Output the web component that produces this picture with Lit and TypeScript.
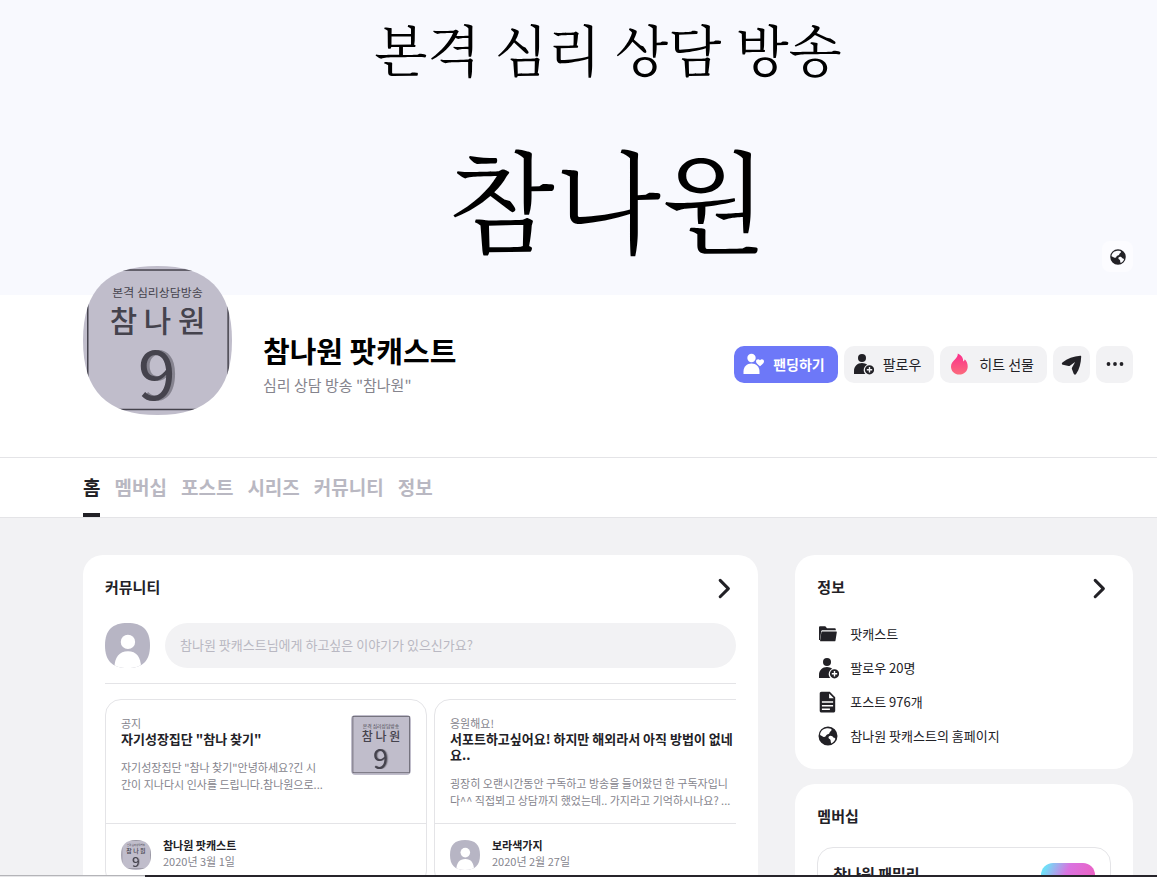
import { LitElement, html, svg, css } from "lit";
import { customElement, property } from "lit/decorators.js";

const SQUIRCLE =
  "M50 0C84 0 100 16 100 50S84 100 50 100 0 84 0 50 16 0 50 0Z";

const person = svg`
  <circle cx="10" cy="5" r="4"/>
  <path d="M2 21v-3c0-4.600 3.400-8 8-8 2 0 3.800.7 5.200 1.800A5.600 5.600 0 0 0 13.400 21Z"/>`;

const icons: Record<string, unknown> = {
  fan: svg`
    <circle cx="9.500" cy="5" r="4.200"/>
    <path d="M1.500 21v-2.500c0-4.800 3.400-8 8-8s8 3.200 8 8V21Z"/>
    <path d="M18 13.200c-2.800-2-4-3.200-4-4.900 0-2.300 2.800-2.900 4-1 1.200-1.900 4-1.300 4 1 0 1.700-1.200 2.900-4 4.900Z"/>`,
  follow: svg`${person}
    <path fill-rule="evenodd" d="M17.500 12.200a4.600 4.600 0 1 1 0 9.200 4.600 4.600 0 0 1 0-9.200Zm-.7 1.900v2h-2v1.400h2v2h1.400v-2h2v-1.400h-2v-2Z"/>`,
  flame: svg`
    <defs><linearGradient id="fire" x1="0" y1="0" x2="0" y2="1"><stop offset="0" stop-color="#fb2f8c"/><stop offset="1" stop-color="#fb6a7c"/></linearGradient></defs>
    <path fill="url(#fire)" d="M9.800.5c3.800 1.700 5.600 4.600 5.400 8 .9-.4 1.400-1.200 1.500-2.200 2 2 3 4.600 3 7.100 0 4.700-3.700 8.100-8.400 8.100S3 18.100 3 13.700c0-3.200 1.700-5 3.600-6.900C8.700 4.800 9.900 3.100 9.800.5Z"/>`,
  send: svg`<path d="M1.400 9.400C6.500 5.400 12.500 3.200 19.300 2.700c.6 0 1 .4.900 1-.3 6.500-1.700 12.300-5.100 17.300-.7 1-2.100.8-2.500-.4l-1.700-4.700c-.2-.6-.1-1 .2-1.500l3-5.400-5.200 3.800c-.4.300-.8.300-1.300.2l-5.700-1.300c-1.200-.3-1.500-1.500-.5-2.300Z"/>`,
  more: svg`<circle cx="4.500" cy="11" r="1.900"/><circle cx="11" cy="11" r="1.900"/><circle cx="17.500" cy="11" r="1.900"/>`,
  folder: svg`
    <path d="M2 17V4.500c0-.8.500-1.300 1.300-1.300h5l1.700 2h7.500c.8 0 1.300.5 1.300 1.300v.7H5.500c-.7 0-1.200.4-1.300 1.100L3 17Z"/>
    <path d="M5.300 8.400H19c.6 0 .9.400.8.900l-1.300 8.100c-.1.600-.5.900-1 .9H3.800c-.5 0-.8-.4-.7-.9L4.400 9.300c.1-.6.400-.9.900-.9Z"/>`,
  post: svg`<path fill-rule="evenodd" d="M4.500.8h8.300l5.400 5.400v13.500c0 1.100-.7 1.800-1.800 1.800H4.500c-1.100 0-1.800-.7-1.800-1.800V2.600C2.700 1.500 3.400.8 4.500.8Zm7.600 1.600v4.800h4.700ZM4.900 10.300v1.500h11.200v-1.500Zm0 3.600v1.500h11.200v-1.500Zm0 3.600V19h8v-1.500Z"/>`,
  globe: svg`<path fill-rule="evenodd" d="M11 1.500a9.500 9.500 0 1 1 0 19 9.500 9.500 0 0 1 0-19ZM9.800 3.300C7 3.600 4.700 5.200 3.600 7.500c-.4 1-.6 1.800-.5 2.600l3 1.600c1.300.5 2.600.2 3-1.100.4-1.200 1.500-1.200 2.500-1.600 1.200-.5.800-2 1.800-2.600 1.300-.7 1.600-1.900.5-2.600-1.200-.5-2.600-.7-4.100-.5Zm3.600 7.500c-1.300.1-2.200 1-1.800 2.200.4 1.100 1.700 1 2 2.200.2 1.200.1 2.500.9 3.200 1.800-.9 3.300-2.500 3.900-4.600-.7-.8-1.300-1.100-2.100-1.200-.5-1.100-1.600-1.900-2.900-1.800Z"/>`,
  chevron: svg`<path fill="none" stroke="currentColor" stroke-width="2.800" stroke-linecap="round" stroke-linejoin="round" d="m7.500 4 7.500 7.500-7.500 7.500"/>`,
};

@customElement("ui-icon")
export class UiIcon extends LitElement {
  @property() name = "";
  static styles = css`
    :host { display: inline-flex; flex: none; width: 22px; height: 22px; }
    svg { width: 100%; height: 100%; fill: currentColor; }
  `;
  render() {
    return html`<svg viewBox="0 0 22 22" aria-hidden="true">${icons[this.name]}</svg>`;
  }
}

@customElement("ui-avatar")
export class UiAvatar extends LitElement {
  @property() kind: "guest" | "cover" | "thumb" = "guest";
  static styles = css`
    :host { display: block; flex: none; }
    svg { display: block; width: 100%; height: 100%; }
    text { font-family: "Noto Sans CJK KR", sans-serif; text-anchor: middle; fill: #45434d; }
    .nine { filter: drop-shadow(2px 0 0 #85838f); }
  `;
  render() {
    const guest = this.kind === "guest";
    return html`<svg viewBox="0 0 100 100" role="img" aria-label=${guest ? "프로필" : "참나원"}>
      <defs><clipPath id="c">${this.kind === "thumb"
        ? svg`<rect width="100" height="100" rx="7"/>`
        : svg`<path d=${SQUIRCLE}/>`}</clipPath></defs>
      <g clip-path="url(#c)">
        <rect width="100" height="100" fill=${guest ? "#b7b5c4" : "#c0bdcb"}></rect>
        ${guest
          ? svg`<circle cx="51" cy="42" r="16" fill="#fff"/><path d="M21 100c0-24 11-37 30-37s29 13 29 37Z" fill="#fff"/>`
          : svg`
            <rect x="3.200" y="2.700" width="94.200" height="93.600" fill="none" stroke="#45434d"/>
            <text x="50" y="21" font-size="8">본격 심리상담방송</text>
            <text x="50" y="44" font-size="20" font-weight="500">참 나 원</text>
            <text class="nine" x="49.500" y="90" font-size="46">9</text>`}
      </g>
    </svg>`;
  }
}

interface Post {
  tag: string; title: string; body: string; author: string; date: string; own: boolean;
}

const posts: Post[] = [
  {
    tag: "공지", title: '자기성장집단 "참나 찾기"',
    body: '자기성장집단 "참나 찾기"안녕하세요?긴 시\n간이 지나다시 인사를 드립니다.참나원으로...',
    author: "참나원 팟캐스트", date: "2020년 3월 1일", own: true,
  },
  {
    tag: "응원해요!", title: "서포트하고싶어요! 하지만 해외라서 아직 방법이 없네요..",
    body: "굉장히 오랜시간동안 구독하고 방송을 들어왔던 한 구독자입니\n다^^ 직접뵈고 상담까지 했었는데.. 가지라고 기억하시나요? ...",
    author: "보라색가지", date: "2020년 2월 27일", own: false,
  },
];

const tabs = ["홈", "멤버십", "포스트", "시리즈", "커뮤니티", "정보"];

const info = [
  ["folder", "팟캐스트"],
  ["follow", "팔로우 20명"],
  ["post", "포스트 976개"],
  ["globe", "참나원 팟캐스트의 홈페이지"],
];

@customElement("app-root")
export class AppRoot extends LitElement {
  static styles = css`
    :host {
      display: block;
      height: 100vh;
      overflow-y: auto;
      scrollbar-width: none;
      background: #f2f2f4;
      color: #222126;
      font-family: "Noto Sans CJK KR", "Noto Sans", sans-serif;
      font-size: 13px;
    }
    * { box-sizing: border-box; }
    h1, h2, h3, p, ul { margin: 0; padding: 0; }
    a { color: inherit; text-decoration: none; }
    button { font: inherit; color: inherit; border: 0; padding: 0; cursor: pointer; }

    .banner {
      position: relative;
      height: 295px;
      padding: 6px 24px 0 83px;
      background: #f8f9fe;
      color: #000;
      text-align: center;
      font-family: "Nanum Myeongjo", "Noto Serif CJK KR", "Noto Serif KR", "Noto Sans CJK KR", serif;
    }
    .slogan { font-size: 55px; line-height: 84px; }
    .show { font-size: 110px; line-height: 160px; margin-top: 26px; }
    .site {
      position: absolute; right: 24px; bottom: 23px;
      display: grid; place-items: center;
      width: 31px; height: 31px; border-radius: 8px;
      background: #fcfcff; color: #222126;
    }
    .site ui-icon { width: 18px; height: 18px; }

    .profile {
      display: flex; align-items: center; gap: 31px;
      min-height: 163px;
      padding: 0 24px 24px 83px;
      background: #fff;
      border-bottom: 1px solid #e4e4e7;
    }
    .cover { align-self: flex-start; width: 149px; height: 149px; margin-top: -29px; position: relative; }
    .who { flex: 1; }
    h1 { font-size: 29px; line-height: 36px; font-weight: 700; color: #000; }
    .about { margin-top: 6px; font-size: 15px; line-height: 22px; color: #85848d; }
    .actions { display: flex; gap: 6px; }
    .btn {
      display: flex; align-items: center; gap: 9px;
      height: 37px; padding: 0 13px 0 8px; border-radius: 10px;
      background: #f2f2f4; font-size: 14px; white-space: nowrap;
    }
    .primary { background: #6d78f8; color: #fff; font-weight: 700; }
    .square { justify-content: center; width: 37px; padding: 0; }

    .tabs {
      display: flex; gap: 14px;
      height: 60px; padding: 0 24px 0 83px;
      background: #fff; border-bottom: 1px solid #e4e4e7;
    }
    .tab {
      display: flex; align-items: center;
      border-top: 2px solid transparent; border-bottom: 4px solid transparent;
      font-size: 19px; font-weight: 700; color: #b9b8c2;
    }
    .tab.on { color: #222126; border-bottom-color: #222126; }

    .main {
      display: grid; grid-template-columns: 2fr 1fr; gap: 37px; align-items: start;
      padding: 37px 24px 37px 83px;
    }
    .side { display: grid; gap: 15px; }
    .panel { min-width: 0; padding: 22px; border-radius: 20px; background: #fff; }
    .head { display: flex; justify-content: space-between; height: 22px; margin-bottom: 24px; }
    .head.tight { margin-bottom: 19px; }
    h2 { font-size: 15px; line-height: 20px; font-weight: 700; }
    .go { display: flex; align-items: center; background: none; }
    .go ui-icon { width: 24px; height: 24px; }

    .ask { display: flex; gap: 15px; padding-bottom: 15px; border-bottom: 1px solid #e4e4e7; }
    .me { width: 45px; height: 45px; }
    .ask input {
      flex: 1; min-width: 0; height: 45px; padding: 0 15px 2px;
      border: 0; border-radius: 23px; background: #f2f2f4;
      font: inherit; outline: none;
    }
    .ask input::placeholder { color: #b9b8c2; opacity: 1; }

    .posts { display: flex; gap: 7px; margin-top: 15px; overflow: hidden; }
    .post { flex: none; width: 322px; border: 1px solid #e4e4e7; border-radius: 16px; }
    .top { display: flex; gap: 24px; height: 124px; padding: 15px; border-bottom: 1px solid #e4e4e7; }
    .words { flex: 1; min-width: 0; }
    .tag { font-size: 11px; line-height: 16px; color: #85848d; }
    h3 { font-size: 13px; line-height: 16px; font-weight: 700; }
    .text { margin-top: 12px; font-size: 11px; line-height: 17px; color: #85848d; white-space: pre; }
    .thumb { width: 60px; height: 60px; }
    .by { display: flex; gap: 12px; padding: 16px 15px; font-size: 11px; line-height: 16px; }
    .face { width: 30px; height: 30px; }
    .by div { margin-top: -3px; }
    .by b { display: block; font-weight: 700; }
    .by time { color: #85848d; }

    .info { display: grid; gap: 12px; list-style: none; }
    .info li { display: flex; align-items: center; gap: 11px; height: 22px; line-height: 20px; }

    .plan {
      display: flex; justify-content: space-between; align-items: flex-start;
      min-height: 120px; padding: 15px;
      border: 1px solid #e4e4e7; border-radius: 16px;
    }
    .plan h3 { font-size: 15px; line-height: 22px; }
    .badge {
      width: 54px; height: 54px; border-radius: 12px;
      background: linear-gradient(115deg, #6fe0f8 8%, #d973e0 38%, #ee5fc0 80%);
    }
    .dock {
      position: fixed; left: 0; right: 0; bottom: 0;
      display: flex; height: 2px; background: #26242a;
    }
    .dock i { width: 145px; background: #e6e6e8; border-top: 1px solid #b4b4b8; }
  `;

  render() {
    return html`
      <header class="banner">
        <p class="slogan">본격 심리 상담 방송</p>
        <p class="show">참나원</p>
        <a class="site" href="#" aria-label="홈페이지"><ui-icon name="globe"></ui-icon></a>
      </header>
      <section class="profile">
        <ui-avatar class="cover" kind="cover"></ui-avatar>
        <div class="who">
          <h1>참나원 팟캐스트</h1>
          <p class="about">심리 상담 방송 "참나원"</p>
        </div>
        <div class="actions">
          <button class="btn primary"><ui-icon name="fan"></ui-icon>팬딩하기</button>
          <button class="btn"><ui-icon name="follow"></ui-icon>팔로우</button>
          <button class="btn"><ui-icon name="flame"></ui-icon>히트 선물</button>
          <button class="btn square" aria-label="공유"><ui-icon name="send"></ui-icon></button>
          <button class="btn square" aria-label="더보기"><ui-icon name="more"></ui-icon></button>
        </div>
      </section>
      <nav class="tabs">
        ${tabs.map((t, i) => html`<a class="tab ${i === 0 ? "on" : ""}" href="#">${t}</a>`)}
      </nav>
      <main class="main">
        <section class="panel">
          <div class="head">
            <h2>커뮤니티</h2>
            <button class="go" aria-label="커뮤니티 더보기"><ui-icon name="chevron"></ui-icon></button>
          </div>
          <div class="ask">
            <ui-avatar class="me"></ui-avatar>
            <input type="text" aria-label="이야기" placeholder="참나원 팟캐스트님에게 하고싶은 이야기가 있으신가요?" />
          </div>
          <div class="posts">${posts.map((p) => this.post(p))}</div>
        </section>
        <aside class="side">
          <section class="panel">
            <div class="head">
              <h2>정보</h2>
              <button class="go" aria-label="정보 더보기"><ui-icon name="chevron"></ui-icon></button>
            </div>
            <ul class="info">
              ${info.map(([icon, label]) => html`<li><ui-icon name=${icon}></ui-icon>${label}</li>`)}
            </ul>
          </section>
          <section class="panel">
            <div class="head tight"><h2>멤버십</h2></div>
            <div class="plan"><h3>참나원 패밀리</h3><span class="badge"></span></div>
          </section>
        </aside>
      </main>
      <div class="dock"><i></i></div>
    `;
  }

  private post(p: Post) {
    return html`
      <article class="post">
        <div class="top">
          <div class="words">
            <p class="tag">${p.tag}</p>
            <h3>${p.title}</h3>
            <p class="text">${p.body}</p>
          </div>
          ${p.own ? html`<ui-avatar class="thumb" kind="thumb"></ui-avatar>` : null}
        </div>
        <div class="by">
          <ui-avatar class="face" kind=${p.own ? "cover" : "guest"}></ui-avatar>
          <div><b>${p.author}</b><time>${p.date}</time></div>
        </div>
      </article>
    `;
  }
}
